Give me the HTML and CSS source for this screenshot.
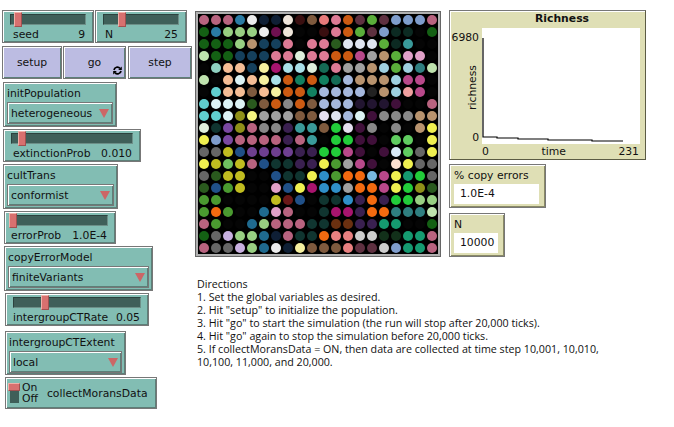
FILE: index.html
```html
<!DOCTYPE html>
<html lang="en">
<head>
  <meta charset="UTF-8">
  <title>Cultural Transmission Model</title>
  <link rel="stylesheet" href="styles.css">
</head>
<body>
  <main class="page">
    <section class="controls">
      <div class="row">
        <div class="widget slider seed">
          <div class="trough"><span class="handle"></span></div>
          <div class="readout"><span>seed</span><span>9</span></div>
        </div>
        <div class="widget slider size">
          <div class="trough"><span class="handle"></span></div>
          <div class="readout"><span>N</span><span>25</span></div>
        </div>
      </div>

      <div class="row buttons">
        <button class="widget button setup">setup</button>
        <button class="widget button go">go
          <svg class="forever" viewBox="0 0 9 9" width="9" height="9">
            <path d="M1 4 A3.4 3.4 0 0 1 7 2.4" fill="none" stroke="#000" stroke-width="1.7"/>
            <path d="M8.8 0.4 V4 H5.2 Z" fill="#000"/>
            <path d="M8 5 A3.4 3.4 0 0 1 2 6.6" fill="none" stroke="#000" stroke-width="1.7"/>
            <path d="M0.2 8.6 V5 H3.8 Z" fill="#000"/>
          </svg>
        </button>
        <button class="widget button step">step</button>
      </div>

      <div class="widget chooser init-population">
        <div class="chooser-label">initPopulation</div>
        <div class="chooser-box">heterogeneous<span class="arrow"></span></div>
      </div>

      <div class="widget slider extinction">
        <div class="trough"><span class="handle"></span></div>
        <div class="readout"><span>extinctionProb</span><span>0.010</span></div>
      </div>

      <div class="widget chooser cult-trans">
        <div class="chooser-label">cultTrans</div>
        <div class="chooser-box">conformist<span class="arrow"></span></div>
      </div>

      <div class="widget slider error-prob">
        <div class="trough"><span class="handle"></span></div>
        <div class="readout"><span>errorProb</span><span>1.0E-4</span></div>
      </div>

      <div class="widget chooser copy-error">
        <div class="chooser-label">copyErrorModel</div>
        <div class="chooser-box">finiteVariants<span class="arrow"></span></div>
      </div>

      <div class="widget slider ct-rate">
        <div class="trough"><span class="handle"></span></div>
        <div class="readout"><span>intergroupCTRate</span><span>0.05</span></div>
      </div>

      <div class="widget chooser ct-extent">
        <div class="chooser-label">intergroupCTExtent</div>
        <div class="chooser-box">local<span class="arrow"></span></div>
      </div>

      <div class="widget switch morans">
        <div class="toggle"><span class="toggle-handle"></span></div>
        <div class="toggle-states"><span>On</span><span>Off</span></div>
        <div class="switch-label">collectMoransData</div>
      </div>
    </section>

    <section class="world">
      <div class="world-grid" id="world"></div>
    </section>

    <section class="outputs">
      <div class="plot">
        <div class="plot-title">Richness</div>
        <div class="plot-body">
          <div class="y-axis">
            <span>6980</span>
            <span class="y-name">richness</span>
            <span>0</span>
          </div>
          <svg class="plot-canvas" viewBox="0 0 158 116" width="158" height="116">
            <path d="M1 10 V109 H15 V110 H36 V111 H66 V112 H110 V113 H141" fill="none" stroke="#000" stroke-width="1.2"/>
          </svg>
        </div>
        <div class="x-axis"><span>0</span><span>time</span><span>231</span></div>
      </div>

      <div class="widget monitor copy-monitor">
        <div class="monitor-label">% copy errors</div>
        <div class="monitor-value">1.0E-4</div>
      </div>

      <div class="widget monitor n-monitor">
        <div class="monitor-label">N</div>
        <div class="monitor-value">10000</div>
      </div>
    </section>

    <section class="directions">
      <p>Directions</p>
      <p>1. Set the global variables as desired.</p>
      <p>2. Hit "setup" to initialize the population.</p>
      <p>3. Hit "go" to start the simulation (the run will stop after 20,000 ticks).</p>
      <p>4. Hit "go" again to stop the simulation before 20,000 ticks.</p>
      <p>5. If collectMoransData = ON, then data are collected at time step 10,001, 10,010,</p>
      <p>10,100, 11,000, and 20,000.</p>
    </section>
  </main>

  <script src="grid.js"></script>
</body>
</html>
```

FILE: styles.css
```css
* {
  margin: 0;
  padding: 0;
  box-sizing: border-box;
}

body {
  background: #fff;
  color: #111;
  font-family: "DejaVu Sans", sans-serif;
  font-size: 10.8px;
}

.page {
  display: grid;
  grid-template-columns: 193px 254px 1fr;
  grid-template-rows: 247px auto;
  padding: 10px 0 0 2px;
}

/* left column */
.controls {
  grid-row: 1 / 3;
  display: flex;
  flex-direction: column;
  align-items: flex-start;
  gap: 2px;
}

.row {
  display: flex;
  gap: 1px;
  margin-bottom: 1px;
}

.widget {
  border: 1px solid #777;
  box-shadow: inset 1px 1px #fff, inset -1px -1px #5d7f78;
  background: #82bdb3;
  flex: none;
}

/* sliders */
.slider {
  height: 33px;
  padding: 3px 7px 0;
}

.trough {
  position: relative;
  height: 11px;
  background: #3f5f59;
  border: 1px solid #6d8f88;
  border-top-color: #2c423e;
  border-left-color: #2c423e;
}

.handle {
  position: absolute;
  top: -3px;
  width: 8px;
  height: 15px;
  background: #d8706f;
  border: 1px solid #a05050;
  border-left-color: #f0b0a8;
  border-top-color: #f0b0a8;
}

.readout {
  display: flex;
  justify-content: space-between;
  padding: 4px 1px 0 3px;
  line-height: 12px;
}

.seed, .size { width: 92px; }
.seed .handle { left: 3px; }
.size .handle { left: 14px; }
.size .readout { padding-left: 2px; }

.extinction {
  width: 138px;
  margin-left: 1px;
}
.extinction .handle { left: 6px; }
.extinction .readout { padding-left: 2px; }

.error-prob {
  width: 112px;
  margin-left: 2px;
  padding-left: 4px;
}
.error-prob .handle { left: -1px; }
.error-prob .readout { padding-left: 2px; }

.ct-rate {
  width: 144px;
  margin-left: 3px;
}
.ct-rate .handle { left: 27px; }
.ct-rate .readout { padding-left: 0; }

/* buttons */
.buttons { gap: 1px; }

.button {
  position: relative;
  height: 33px;
  background: #bcbce2;
  font: inherit;
  color: #111;
}

.setup { width: 60px; }
.go { width: 63px; margin-right: 1px; }
.step { width: 64px; }

.forever {
  position: absolute;
  right: 3px;
  bottom: 3px;
}

/* choosers */
.chooser {
  height: 45px;
  padding: 3px 3px 0;
}

.chooser-label {
  line-height: 15px;
}

.chooser-box {
  display: flex;
  align-items: center;
  justify-content: space-between;
  height: 22px;
  margin-top: 1px;
  padding: 0 3px 0 3px;
  border: 1px solid #777;
  box-shadow: inset 1px 1px #fff, inset -1px -1px #5d7f78;
}

.arrow {
  width: 0;
  height: 0;
  border-left: 5px solid transparent;
  border-right: 5px solid transparent;
  border-top: 9px solid #cc6666;
}

.init-population { width: 114px; margin-left: 1px; }
.cult-trans { width: 115px; margin-left: 1px; }
.copy-error { width: 149px; margin-left: 2px; }
.ct-extent { width: 121px; height: 44px; margin: 3px 0 0 3px; }

/* switch */
.switch {
  display: flex;
  align-items: center;
  height: 32px;
  margin-left: 3px;
  padding-left: 3px;
}

.morans { width: 152px; }

.toggle {
  position: relative;
  width: 9px;
  height: 20px;
  margin-left: 1px;
  background: #3f5f59;
}

.toggle-handle {
  position: absolute;
  top: 0;
  left: -2px;
  width: 12px;
  height: 8px;
  background: #d8706f;
  border: 1px solid #a05050;
  border-left-color: #f0b0a8;
  border-top-color: #f0b0a8;
}

.toggle-states {
  display: flex;
  flex-direction: column;
  margin-left: 3px;
  line-height: 11px;
}

.switch-label {
  margin-left: 9px;
}

/* world */
.world {
  align-self: start;
  width: 246px;
  height: 246px;
  margin-top: 1px;
  border: 1px solid #666;
  padding: 2px;
  background: #b0b0b0;
}

.world-grid {
  display: grid;
  grid-template-columns: repeat(20, 12px);
  grid-auto-rows: 12px;
  width: 240px;
  height: 240px;
  background: #000;
}

.dot {
  width: 10.5px;
  height: 10.5px;
  margin: 0.75px 0 0 0.75px;
  border-radius: 50%;
}

/* right column */
.outputs {
  display: flex;
  flex-direction: column;
  align-items: flex-start;
}

.plot {
  display: flex;
  flex-direction: column;
  width: 197px;
  height: 150px;
  border: 1px solid #777;
  border-right-color: #5c5c44;
  border-bottom-color: #5c5c44;
  box-shadow: inset 1px 1px #fff;
  background: #dfdfb5;
}

.plot-title {
  height: 17px;
  padding-left: 33px;
  width: 191px;
  text-align: center;
  font-weight: bold;
  line-height: 16px;
}

.plot-body {
  display: flex;
  height: 116px;
}

.y-axis {
  position: relative;
  display: flex;
  flex-direction: column;
  justify-content: space-between;
  align-items: flex-end;
  width: 32px;
  padding: 4px 3px 0 0;
  line-height: 12px;
}

.y-name {
  writing-mode: vertical-rl;
  transform: rotate(180deg);
  margin-top: -1px;
}

.plot-canvas {
  display: block;
  background: #fff;
}

.x-axis {
  display: flex;
  justify-content: space-between;
  width: 189px;
  padding: 2px 0 0 32px;
  line-height: 12px;
}

.monitor {
  height: 44px;
  padding: 3px 6px 0 4px;
  background: #dfdfb5;
  box-shadow: inset 1px 1px #fff, inset -1px -1px #8a8a66;
}

.copy-monitor { width: 97px; margin-top: 4px; }
.n-monitor { width: 56px; margin-top: 5px; }

.monitor-label {
  line-height: 15px;
}

.monitor-value {
  height: 20px;
  margin-top: 1px;
  padding-left: 6px;
  background: #fff;
  line-height: 20px;
}

/* notes */
.directions {
  grid-column: 2 / 4;
  margin-top: 21px;
  padding-left: 2px;
  font-family: "Open Sans", sans-serif;
  font-size: 10.7px;
  line-height: 13px;
  white-space: nowrap;
}
```

FILE: grid.js
```js
// one letter per patch, read left to right, top to bottom
const palette = {
  '.': '#050505', a: '#b8637f', b: '#2a7ba3', c: '#ececec', d: '#0f1f35',
  e: '#efe5da', f: '#3a0f10', g: '#7f5a3e', h: '#e87a7a', i: '#dd7a95',
  j: '#cc5a12', k: '#5e3040', l: '#5aae3a', m: '#7f9dcc', n: '#146014',
  o: '#98cf82', p: '#6e1050', q: '#0c2a22', r: '#15405c', s: '#b8936e',
  t: '#2a5a1e', u: '#dfe4f0', v: '#3a9a9a', w: '#bfe3ae', x: '#b8488a',
  y: '#a0a0a0', z: '#e0a0c8', A: '#8fd0c0', B: '#f5bd95', C: '#f5f0a0',
  D: '#a8146e', E: '#a8e0e8', F: '#dfefdc', G: '#156b55', H: '#9fd0e0',
  I: '#2f7f80', J: '#dcf3f5', K: '#128060', L: '#a5b8dd', M: '#60cfcf',
  N: '#222222', O: '#f0a0a0', P: '#888888', Q: '#221530', R: '#40103a',
  S: '#8f9018', T: '#f5f580', U: '#e5dff0', V: '#103530', W: '#7a48a0',
  X: '#3a2050', Y: '#22cc3a', Z: '#f0f050', 0: '#666666', 1: '#c0bc20',
  2: '#205088', 3: '#6e3f90', 4: '#70c060', 5: '#4a9a30', 6: '#6a1818',
  7: '#f26a10', 9: '#c8b0e0', '!': '#2f8fc8', '@': '#60cc60', '#': '#d8e8f5',
  $: '#fce0d0', '%': '#cccccc', '^': '#159a70', '&': '#78b8e0', '*': '#6a3010',
  '(': '#12301a', ')': '#e88080', '-': '#1f6a8f'
}

const rows = [
  'aaabcddefghijklkmmma',
  'nbooocpe..fijlkmqq.n',
  'nnnosrri.iituuulqv..',
  'wnnrrriiFiijjxyslzz.',
  '.ABBrCDEEFGiyysHlHIw',
  'w.BJBCEjKjKGLsssHxx.',
  '.MBBgBCjjKLLLLNsHOx.',
  'MJJJtgjPjgLLLQQQR..a',
  'MMJSTyyyggUuLJRPPPss',
  'FVWSaPPXvvgYURP.P.sZ',
  'ZmWaaaaXav.YYRR.@@.Z',
  '00123333XXYYxR.R#@0Z',
  'Z141a2VVXXZ5yxR.$Z00',
  '0t11..2VVZ!577&xZ^Y0',
  't251..z2ZD!!y77xZYSt',
  '55....162.VV!X7XYYoo',
  '575..-za..VDDX77IIIw',
  'a5..-oaaaVV**XX^^..n',
  'n09oo-daVV7))%%((^^a',
  'a009o-cdCggg)kk%m^^a'
]

const world = document.getElementById('world')

rows.forEach(row => {
  row.split('').forEach(key => {
    const dot = document.createElement('span')
    dot.className = 'dot'
    dot.style.background = palette[key]
    world.appendChild(dot)
  })
})
```
